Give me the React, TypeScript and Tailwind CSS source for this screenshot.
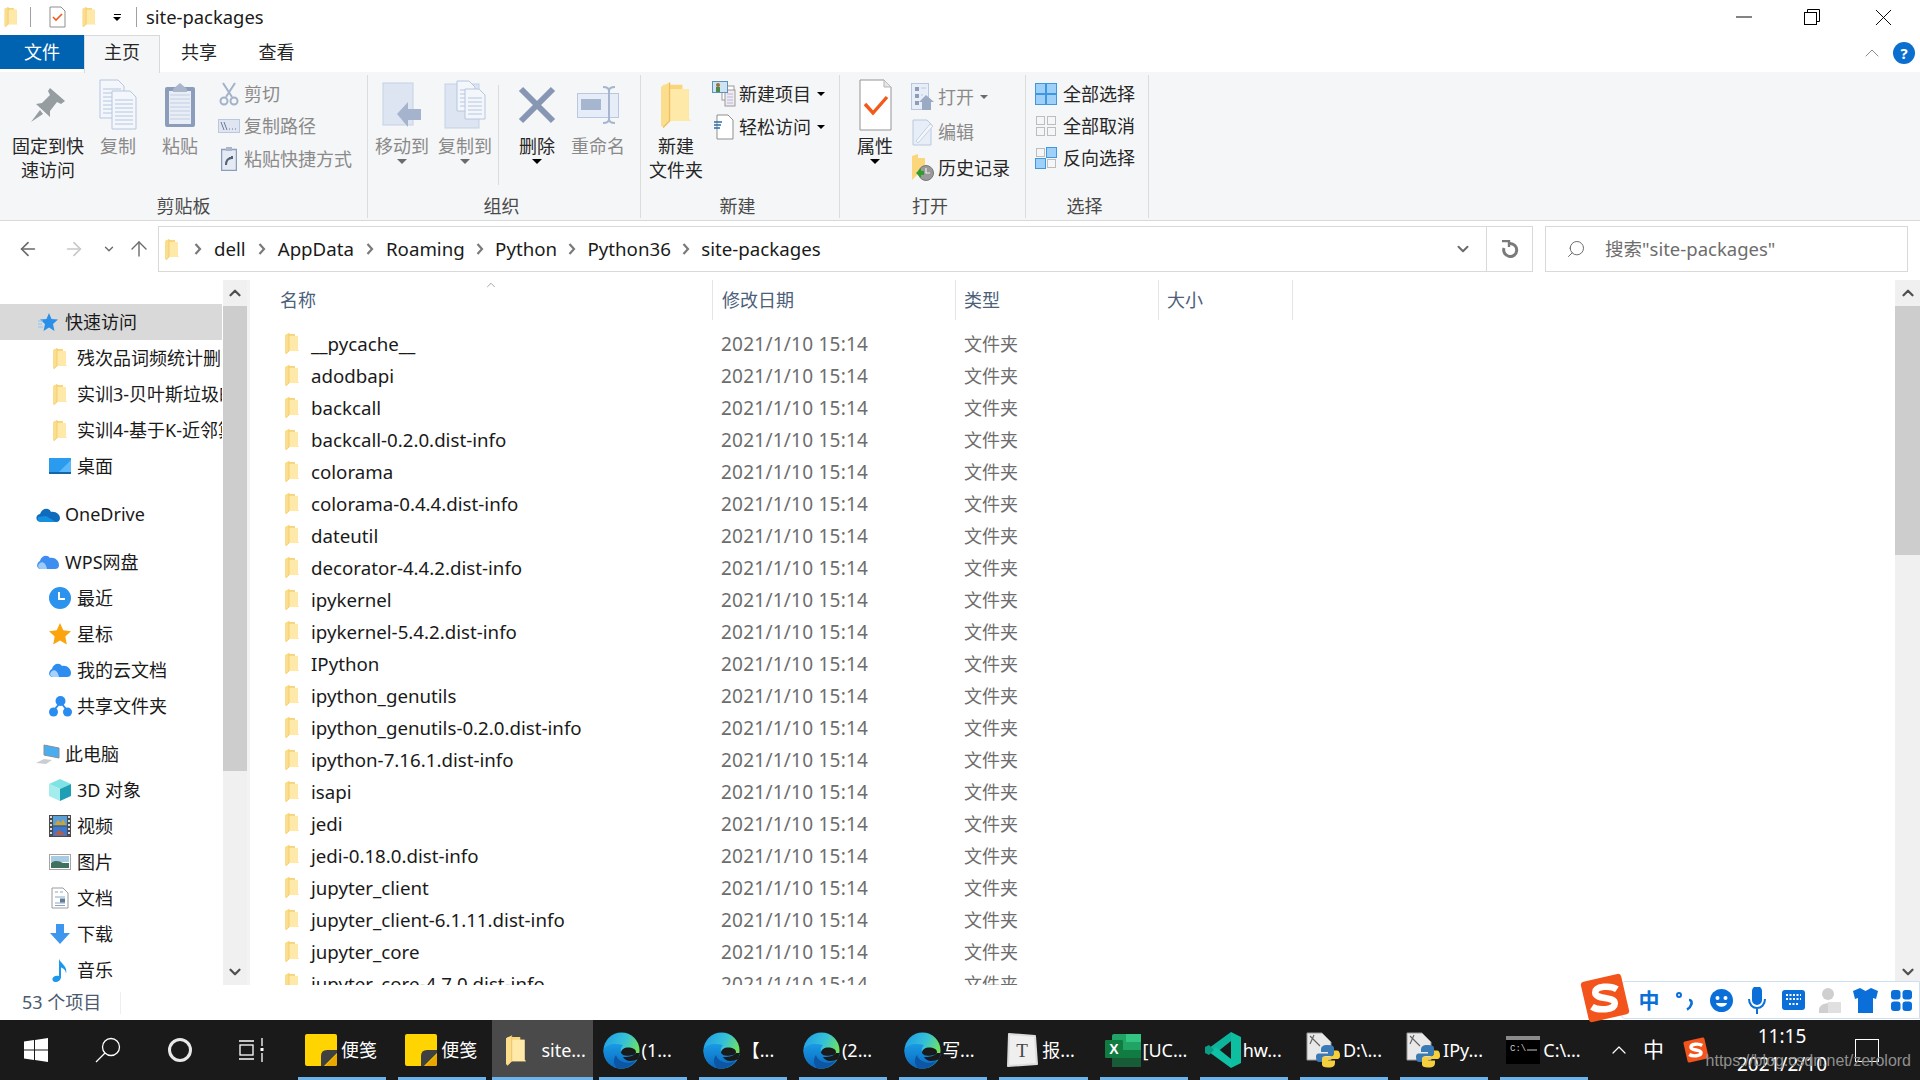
import React from 'react'
import { ArrowLeft, ArrowRight, ArrowUp, ChevronDown, ChevronUp, Search, X, Minus } from 'lucide-react'

const files = [
  '__pycache__', 'adodbapi', 'backcall', 'backcall-0.2.0.dist-info', 'colorama', 'colorama-0.4.4.dist-info',
  'dateutil', 'decorator-4.4.2.dist-info', 'ipykernel', 'ipykernel-5.4.2.dist-info', 'IPython', 'ipython_genutils',
  'ipython_genutils-0.2.0.dist-info', 'ipython-7.16.1.dist-info', 'isapi', 'jedi', 'jedi-0.18.0.dist-info',
  'jupyter_client', 'jupyter_client-6.1.11.dist-info', 'jupyter_core', 'jupyter_core-4.7.0.dist-info',
]

// Explorer's yellow folder
function Folder({ w = 14, h = 21 }: { w?: number; h?: number }) {
  return (
    <svg width={w} height={h} viewBox="0 0 14 21" className="shrink-0">
      <path d="M1 1 L10 1 L10 3 L13 3 L13 17 L14 18 L4 18 L1 20 Z" fill="#f9d67b" />
      <path d="M4 3 L13 3 L13 17 L14 18 L4 18 Z" fill="#ffe9a8" />
      <path d="M0 2 L4 0 L4 18 L1 21 L0 20 Z" fill="#fbdd8e" />
      <path d="M4 0 L4 18 L1 21" fill="none" stroke="#eebf5c" strokeWidth="0.6" />
    </svg>
  )
}

function Page({ x, y, w, h }: { x: number; y: number; w: number; h: number }) {
  const lines = []
  for (let ly = y + 9; ly < y + h - 3; ly += 4) lines.push(ly)
  return (
    <g>
      <path d={`M${x} ${y} H${x + w - 6} L${x + w} ${y + 6} V${y + h} H${x} Z`} fill="#f3f6fb" stroke="#b7c6de" />
      {lines.map(l => <path key={l} d={`M${x + 3} ${l} H${x + w - 3}`} stroke="#b7c6de" />)}
    </g>
  )
}

const icons: Record<string, React.ReactNode> = {
  pin: (
    <svg width="36" height="36" viewBox="0 0 36 36">
      <path d="M20 1 L35 14 L31 17 L27 15 L20 24 L20 30 L6 17 L12 16 L20 8 L18 4 Z" fill="#959da1" />
      <path d="M10 23 L1 35 L13 27 Z" fill="#959da1" />
    </svg>
  ),
  copy: (
    <svg width="38" height="52" viewBox="0 0 38 52">
      <Page x={1} y={1} w={24} h={38} />
      <Page x={13} y={12} w={24} h={38} />
    </svg>
  ),
  paste: (
    <svg width="32" height="46" viewBox="0 0 32 46">
      <rect x="1" y="5" width="30" height="40" rx="2" fill="#8c9dbb" />
      <rect x="5" y="9" width="22" height="33" fill="#e8edf6" />
      {[13, 17, 21, 25, 29, 33, 37].map(y => <path key={y} d={`M6 ${y} H26`} stroke="#c3cfe2" />)}
      <path d="M9 7 L16 1 L23 7 L23 10 L9 10 Z" fill="#a9b6cc" />
    </svg>
  ),
  cut: (
    <svg width="20" height="24" viewBox="0 0 20 24" fill="none" stroke="#a3b2ca" strokeWidth="2">
      <path d="M4 1 L13 15 M16 1 L7 15" />
      <circle cx="5" cy="19" r="3.5" />
      <circle cx="15" cy="19" r="3.5" />
    </svg>
  ),
  path: (
    <svg width="22" height="14" viewBox="0 0 22 14">
      <rect x="0.5" y="0.5" width="21" height="13" fill="#dfe6f2" stroke="#bac7dc" />
      <path d="M3 3 L6 11 M6 3 L9 11" stroke="#6d7b91" />
      <path d="M11 10 h1 M14 10 h1 M17 10 h1" stroke="#6d7b91" />
    </svg>
  ),
  shortcut: (
    <svg width="16" height="24" viewBox="0 0 16 24">
      <rect x="0.5" y="2.5" width="15" height="21" fill="#e5ebf5" stroke="#8c9dbb" strokeWidth="1.5" />
      <rect x="5" y="0" width="6" height="4" fill="#a9b6cc" />
      <path d="M5 18 C5 13 7 11 11 11 L11 9 M11 11 L8 11" stroke="#566377" strokeWidth="2" fill="none" />
    </svg>
  ),
  move: (
    <svg width="40" height="46" viewBox="0 0 40 46">
      <rect x="1" y="1" width="30" height="42" fill="#dde5f2" stroke="#c4d1e5" />
      <path d="M15 32 L26 20 V27 H39 V38 H26 V45 Z" fill="#a5b4cc" />
    </svg>
  ),
  copyTo: (
    <svg width="42" height="50" viewBox="0 0 42 50">
      <rect x="1" y="4" width="34" height="44" fill="#dde5f2" stroke="#c4d1e5" />
      <Page x={13} y={1} w={18} h={30} />
      <Page x={21} y={9} w={20} h={30} />
    </svg>
  ),
  del: (
    <svg width="38" height="38" viewBox="0 0 38 38">
      <path d="M3 3 L35 35 M35 3 L3 35" stroke="#8796b2" strokeWidth="6" />
    </svg>
  ),
  rename: (
    <svg width="42" height="40" viewBox="0 0 42 40">
      <rect x="0.5" y="11.5" width="41" height="24" fill="#e6edf8" stroke="#b9c8df" transform="translate(0 -3)" />
      <rect x="4" y="14" width="20" height="11" fill="#a7b6cf" />
      <path d="M26 2 C30 2 32 3 32 6 V34 C32 37 30 38 26 38 M38 2 C34 2 32 3 32 6 M32 34 C32 37 34 38 38 38" fill="none" stroke="#a7b6cf" strokeWidth="2" />
    </svg>
  ),
  newItem: (
    <svg width="24" height="26" viewBox="0 0 24 26">
      <rect x="10" y="5" width="12" height="14" fill="#fff" stroke="#9a9a9a" />
      <rect x="13" y="9" width="10" height="16" fill="#f5e8ee" stroke="#9a9a9a" />
      <path d="M15 13 H21 M15 16 H21 M15 19 H21 M15 22 H21" stroke="#a8bee0" />
      <rect x="0.5" y="0.5" width="15" height="11" fill="#cfe3f2" stroke="#5c93bd" />
      <circle cx="6" cy="4" r="2" fill="#a0703a" />
      <rect x="4" y="6" width="4" height="5" fill="#4d8a4d" />
    </svg>
  ),
  easy: (
    <svg width="20" height="26" viewBox="0 0 20 26">
      <path d="M3 1 H14 L19 6 V25 H3 Z" fill="#fff" stroke="#8f8f8f" />
      <path d="M0 8 H8 M0 11 H7 M0 14 H6" stroke="#2d6da8" strokeWidth="1.3" />
    </svg>
  ),
  check: (
    <svg width="33" height="52" viewBox="0 0 33 52">
      <path d="M1 1 H25 L32 8 V51 H1 Z" fill="#fff" stroke="#949494" />
      <path d="M25 1 V8 H32" fill="#e6e6e6" stroke="#b5b5b5" />
      <path d="M6 25 L14 34 L28 18" fill="none" stroke="#f2591a" strokeWidth="3.4" />
    </svg>
  ),
  open: (
    <svg width="24" height="28" viewBox="0 0 24 28">
      <rect x="0.5" y="0.5" width="17" height="26" fill="#e8eef8" stroke="#b9c8df" />
      <rect x="4" y="4" width="4" height="4" fill="#8f9eb8" />
      <rect x="4" y="11" width="4" height="4" fill="#8f9eb8" />
      <rect x="4" y="18" width="4" height="4" fill="#8f9eb8" />
      <path d="M10 5 H15 M10 12 H12" stroke="#b9c8df" />
      <path d="M15 12 L23 19 H20 V27 H11 V19 H8 Z" fill="#9aaac4" />
    </svg>
  ),
  edit: (
    <svg width="22" height="27" viewBox="0 0 22 27">
      <path d="M1 1 H15 L19 5 V26 H1 Z" fill="#e8eef8" stroke="#b9c8df" />
      <path d="M4 22 L18 5 L21 7 L6 24 Z" fill="#f5f7fb" stroke="#c6d1e3" />
    </svg>
  ),
  history: (
    <svg width="24" height="28" viewBox="0 0 24 28">
      <path d="M1 2 L7 0 V4 H14 V20 H7 L1 26 Z" fill="#fbd67a" />
      <circle cx="15" cy="19" r="7.5" fill="#9a9a9a" stroke="#777" />
      <path d="M15 14 V19 H19" stroke="#eee" strokeWidth="1.2" fill="none" />
      <path d="M5 19 L10 14 V17 H13 V21 H10 V24 Z" fill="#2f9e2f" />
    </svg>
  ),
}

function Grid({ cells }: { cells: boolean[] }) {
  return (
    <svg width="22" height="22" viewBox="0 0 22 22" className="shrink-0">
      {cells.map((on, i) => {
        const x = i % 2 === 0 ? 0.5 : 11.5
        const y = i < 2 ? 0.5 : 11.5
        return on
          ? <rect key={i} x={x} y={y} width="10" height="10" fill="#9fd0f7" stroke="#3f97e2" />
          : <rect key={i} x={x + 1} y={y + 1} width="8" height="8" fill="#f5f6f7" stroke="#bdbdbd" />
      })}
    </svg>
  )
}

function Caret({ dark = false }: { dark?: boolean }) {
  return <div className={`mx-auto mt-[1px] h-0 w-0 border-x-[5px] border-t-[5px] border-x-transparent ${dark ? 'border-t-black' : 'border-t-[#6b6b6b]'}`} />
}

function LargeButton({ icon, lines, width, disabled, caret }: { icon: React.ReactNode; lines: string[]; width: string; disabled?: boolean; caret?: boolean }) {
  return (
    <div className={`flex flex-col items-center ${width}`}>
      <div className="flex h-[54px] items-center justify-center">{icon}</div>
      <div className={`mt-[2px] whitespace-nowrap text-center leading-[24px] ${disabled ? 'text-[#8a8a8a]' : 'text-[#262626]'}`}>
        {lines.map(l => <div key={l}>{l}</div>)}
        {caret && <Caret dark={!disabled} />}
      </div>
    </div>
  )
}

function SmallButton({ icon, label, disabled, caret, h = 'h-8' }: { icon: React.ReactNode; label: string; disabled?: boolean; caret?: boolean; h?: string }) {
  return (
    <div className={`flex items-center ${h}`}>
      <div className="flex w-[26px] shrink-0 justify-center">{icon}</div>
      <span className={`ml-[2px] whitespace-nowrap ${disabled ? 'text-[#8a8a8a]' : 'text-[#262626]'}`}>{label}</span>
      {caret && <div className={`ml-[6px] h-0 w-0 border-x-[4px] border-t-[4px] border-x-transparent ${disabled ? 'border-t-[#6b6b6b]' : 'border-t-black'}`} />}
    </div>
  )
}

function Group({ label, width, labelClass = 'pr-[5px]', children }: { label: string; width: string; labelClass?: string; children: React.ReactNode }) {
  return (
    <div className={`flex h-full shrink-0 flex-col border-r border-[#dcdcdc] ${width}`}>
      <div className="flex h-[122px] pt-[3px]">{children}</div>
      <div className={`text-center leading-[24px] text-[#4a4a4a] ${labelClass}`}>{label}</div>
    </div>
  )
}

function Ribbon() {
  return (
    <div className="flex h-[150px] shrink-0 border-y border-[#d9d9d9] bg-[#f5f6f7] pb-[2px] pt-[3px]">
      <Group label="剪贴板" width="w-[368px]" labelClass="">
        <LargeButton width="w-[96px]" icon={icons.pin} lines={['固定到快', '速访问']} />
        <LargeButton width="w-[44px]" disabled icon={icons.copy} lines={['复制']} />
        <div className="ml-[10px]"><LargeButton width="w-[60px]" disabled icon={icons.paste} lines={['粘贴']} /></div>
        <div className="ml-[6px] flex flex-col">
          <SmallButton disabled icon={icons.cut} label="剪切" />
          <SmallButton disabled icon={icons.path} label="复制路径" />
          <SmallButton disabled icon={icons.shortcut} label="粘贴快捷方式" h="h-[34px]" />
        </div>
      </Group>
      <Group label="组织" width="w-[273px]">
        <LargeButton width="w-[66px] ml-[1px]" disabled caret icon={icons.move} lines={['移动到']} />
        <LargeButton width="w-[60px]" disabled caret icon={icons.copyTo} lines={['复制到']} />
        <div className="ml-[3px] mr-[8px] mt-[7px] h-[100px] w-px bg-[#dcdcdc]" />
        <LargeButton width="w-[60px]" caret icon={icons.del} lines={['删除']} />
        <LargeButton width="w-[62px]" disabled icon={icons.rename} lines={['重命名']} />
      </Group>
      <Group label="新建" width="w-[199px]">
        <LargeButton width="w-[70px]" icon={<Folder w={30} h={46} />} lines={['新建', '文件夹']} />
        <div className="flex flex-col">
          <SmallButton icon={icons.newItem} label="新建项目" caret />
          <SmallButton icon={icons.easy} label="轻松访问" caret h="h-[34px]" />
        </div>
      </Group>
      <Group label="打开" width="w-[186px]">
        <LargeButton width="w-[70px]" caret icon={icons.check} lines={['属性']} />
        <div className="flex flex-col pt-[1px]">
          <SmallButton disabled caret icon={icons.open} label="打开" h="h-[36px]" />
          <SmallButton disabled icon={icons.edit} label="编辑" h="h-[35px]" />
          <SmallButton icon={icons.history} label="历史记录" h="h-[36px]" />
        </div>
      </Group>
      <Group label="选择" width="w-[123px]">
        <div className="ml-[9px] flex flex-col text-[#262626]">
          {[
            { label: '全部选择', cells: [true, true, true, true] },
            { label: '全部取消', cells: [false, false, false, false] },
            { label: '反向选择', cells: [false, true, true, false] },
          ].map(r => (
            <div key={r.label} className="flex h-8 items-center gap-[6px] whitespace-nowrap">
              <Grid cells={r.cells} />
              {r.label}
            </div>
          ))}
        </div>
      </Group>
    </div>
  )
}

function TitleBar() {
  return (
    <div className="flex h-[35px] shrink-0 items-center bg-white pb-[1px]">
      <div className="ml-[4px]"><Folder w={14} h={20} /></div>
      <div className="ml-[12px] h-[20px] w-px bg-[#a0a0a0]" />
      <div className="ml-[18px]"><svg width="17" height="22" viewBox="0 0 17 22"><path d="M1 1 H12 L16 5 V21 H1 Z" fill="#fff" stroke="#8f8f8f" /><path d="M4 11 L7 14 L13 8" fill="none" stroke="#f2591a" strokeWidth="1.6" /></svg></div>
      <div className="ml-[16px]"><Folder w={14} h={20} /></div>
      <div className="ml-[17px] flex flex-col items-center">
        <div className="mb-[2px] h-[1px] w-[7px] bg-black" />
        <div className="h-0 w-0 border-x-[4px] border-t-[4px] border-x-transparent border-t-black" />
      </div>
      <div className="ml-[15px] h-[20px] w-px bg-[#a0a0a0]" />
      <span className="ml-[9px] text-[18.4px] text-[#1a1a1a]">site-packages</span>
      <div className="ml-auto flex items-center">
        <div className="flex w-[67px] justify-center"><Minus size={26} strokeWidth={0.9} /></div>
        <div className="flex w-[69px] justify-center">
          <svg width="16" height="16" viewBox="0 0 16 16" fill="none" stroke="#000"><rect x="0.5" y="3.5" width="12" height="12" /><path d="M3.5 3.5 V0.5 H15.5 V12.5 H12.5" /></svg>
        </div>
        <div className="flex w-[74px] justify-center"><X size={29} strokeWidth={0.8} /></div>
      </div>
    </div>
  )
}

function Tabs() {
  return (
    <div className="relative z-10 -mb-px flex h-[37px] shrink-0 items-start bg-white">
      <div className="flex h-[34px] w-[84px] items-center justify-center bg-[#0063b1] text-white">文件</div>
      <div className="flex h-[38px] w-[76px] items-center justify-center border-x border-t border-[#d9d9d9] bg-[#f5f6f7] pb-[4px] text-[#262626]">主页</div>
      <div className="flex h-[34px] w-[78px] items-center justify-center text-[#262626]">共享</div>
      <div className="flex h-[34px] w-[77px] items-center justify-center text-[#262626]">查看</div>
      <div className="ml-auto flex h-[36px] items-center pr-[5px]">
        <ChevronUp size={24} strokeWidth={1} className="text-[#8a8a8a]" />
        <div className="ml-[9px] flex h-[22px] w-[22px] items-center justify-center rounded-full bg-[#0a6fcf] text-[15px] font-bold text-white">?</div>
      </div>
    </div>
  )
}

const CrumbSep = ({ tight }: { tight: boolean }) => (
  <svg width="8" height="12" viewBox="0 0 8 12" className={`shrink-0 ${tight ? 'mx-[11.2px]' : 'mx-[12px]'}`}><path d="M1.5 1 L6 6 L1.5 11" fill="none" stroke="#7a7a7a" strokeWidth="2.2" /></svg>
)

function AddressRow() {
  const crumbs = ['dell', 'AppData', 'Roaming', 'Python', 'Python36', 'site-packages']
  return (
    <div className="flex h-[59px] shrink-0 items-start bg-white pt-[5px]">
      <div className="flex h-[46px] w-[158px] shrink-0 items-center">
        <ArrowLeft size={22} strokeWidth={1.8} className="ml-[17px] text-[#6a6a6a]" />
        <ArrowRight size={22} strokeWidth={1.8} className="ml-[24px] text-[#c8c8c8]" />
        <ChevronDown size={14} strokeWidth={2.4} className="ml-[17px] text-[#6a6a6a]" />
        <ArrowUp size={24} strokeWidth={1.4} className="ml-[11px] text-[#6a6a6a]" />
      </div>
      <div className="flex h-[46px] w-[1375px] shrink-0 items-center border border-[#d9d9d9]">
        <div className="ml-[6px]"><Folder w={14} h={21} /></div>
        <div className="ml-[3px] flex items-center text-[18.7px] text-[#1a1a1a]">
          {crumbs.map((c, i) => (
            <React.Fragment key={c}>
              <CrumbSep tight={i >= 3} />
              <span>{c}</span>
            </React.Fragment>
          ))}
        </div>
        <ChevronDown size={18} strokeWidth={2.6} className="ml-auto mr-[14px] text-[#6a6a6a]" />
        <div className="flex h-full w-[46px] items-center justify-center border-l border-[#d9d9d9]">
          <svg width="18" height="18" viewBox="0 0 18 18" fill="none" stroke="#7a7a7a" strokeWidth="3">
            <path d="M9 3.5 A6.5 6.5 0 1 1 3 8" />
            <path d="M1 1 L8 1 L8 7" strokeWidth="2.4" />
          </svg>
        </div>
      </div>
      <div className="ml-[12px] flex h-[46px] w-[363px] shrink-0 items-center border border-[#d9d9d9] pl-[20px] text-[#6d6d6d]">
        <Search size={20} strokeWidth={1.2} className="-scale-x-100 text-[#6d6d6d]" />
        <span className="ml-[19px] text-[18.5px]">搜索"site-packages"</span>
      </div>
    </div>
  )
}

const navIcons: Record<string, React.ReactNode> = {
  quick: <svg width="20" height="20" viewBox="0 0 20 20"><path d="M11 1 L13.5 7 L20 7.5 L15 12 L16.5 19 L11 15.5 L5.5 19 L7 12 L2 7.5 L8.5 7 Z" fill="#2a8fe8" /><path d="M0 9 H5 M0 12 H4 M0 15 H5" stroke="#8cc6f5" /></svg>,
  desktop: <svg width="22" height="16" viewBox="0 0 22 16"><rect width="22" height="14" fill="#2b9bf0" /><path d="M10 14 L22 2 V14 Z" fill="#5bb8fa" /><rect y="14" width="22" height="2" fill="#1565a8" /></svg>,
  onedrive: <svg width="24" height="15" viewBox="0 0 24 15"><path d="M5 15 C-1 15 -1 8 4 7 C6 1 13 0 15 5 C20 4 24 8 24 11 C24 13 23 15 20 15 Z" fill="#0f6cbd" /><path d="M5 15 C2 15 1 12 2 10 L10 9 L20 15 Z" fill="#1490df" /></svg>,
  wps: <svg width="22" height="16" viewBox="0 0 22 16"><path d="M4 15 C-1 15 -1 9 3 7 C4 2 10 0 13 4 C18 3 22 7 22 11 C22 14 20 15 18 15 Z" fill="#3d8ef0" /><path d="M4 15 C1 15 0 11 3 9 C6 7 9 10 10 15 Z" fill="#9ccbfa" /></svg>,
  recent: <svg width="22" height="22" viewBox="0 0 22 22"><circle cx="11" cy="11" r="11" fill="#2b92ee" /><path d="M10 5 V12 H16" fill="none" stroke="#fff" strokeWidth="2" /></svg>,
  star: <svg width="22" height="22" viewBox="0 0 22 22"><path d="M11 0 L14.3 7.3 L22 8.2 L16.3 13.5 L17.8 21.5 L11 17.5 L4.2 21.5 L5.7 13.5 L0 8.2 L7.7 7.3 Z" fill="#fba40e" strokeLinejoin="round" /></svg>,
  cloud: <svg width="22" height="16" viewBox="0 0 22 16"><path d="M4 15 C-1 15 -1 9 3 7 C4 2 10 0 13 4 C18 3 22 7 22 11 C22 14 20 15 18 15 Z" fill="#2f8df0" /><path d="M4 15 C1 15 0 11 3 9 C6 7 9 10 10 15 Z" fill="#a8d2fb" /></svg>,
  share: <svg width="23" height="21" viewBox="0 0 23 21" fill="#2b8cf0"><circle cx="11.5" cy="5" r="5" /><circle cx="4.5" cy="16" r="4.5" /><circle cx="18.5" cy="16" r="4.5" /><path d="M10 8 L6 13 M13 8 L17 13" stroke="#2b8cf0" strokeWidth="2" /></svg>,
  pc: <svg width="24" height="20" viewBox="0 0 24 20"><path d="M8 1 L23 4 V14 L8 11 Z" fill="#49aef0" stroke="#8a8f96" /><path d="M0 19 L8 15 L16 16 L10 20 Z" fill="#c9ced3" /></svg>,
  cube: <svg width="22" height="22" viewBox="0 0 22 22"><path d="M11 0 L22 5 L11 10 L0 5 Z" fill="#7fe3e6" /><path d="M0 5 L11 10 V22 L0 17 Z" fill="#a5ecec" /><path d="M22 5 L11 10 V22 L22 17 Z" fill="#1f9fb3" /></svg>,
  video: <svg width="22" height="22" viewBox="0 0 22 22"><rect width="22" height="22" fill="#4a4a4a" /><rect x="4" y="1" width="14" height="9.5" fill="#5a9fd8" /><rect x="4" y="11.5" width="14" height="9.5" fill="#3a78d0" /><path d="M5 10 L9 5 L12 8 L14 4 L17 10 Z" fill="#c9a33c" /><path d="M5 20 L10 15 L17 20 Z" fill="#c05a3c" /><path d="M1 2 h2 M1 6 h2 M1 10 h2 M1 14 h2 M1 18 h2 M19 2 h2 M19 6 h2 M19 10 h2 M19 14 h2 M19 18 h2" stroke="#ddd" strokeWidth="2" /></svg>,
  pic: <svg width="22" height="16" viewBox="0 0 22 16"><rect x="0.5" y="0.5" width="21" height="15" fill="#fff" stroke="#a5a5a5" /><rect x="2" y="2" width="18" height="6" fill="#a9cbe3" /><path d="M2 9 C6 6 10 7 14 9 L20 9 V14 H2 Z" fill="#3f7060" /></svg>,
  doc: <svg width="18" height="22" viewBox="0 0 18 22"><path d="M1 1 H12 L17 6 V21 H1 Z" fill="#fff" stroke="#9c9c9c" /><path d="M4 5 H7 M9 5 H12 M4 10 H14 M4 16 H14 M4 18.5 H14" stroke="#8aa5c5" /><rect x="9" y="11.5" width="5" height="4" fill="#5d7d99" /></svg>,
  down: <svg width="20" height="20" viewBox="0 0 20 20"><path d="M6 0 H14 V9 H20 L10 20 L0 9 H6 Z" fill="#3e97ec" /></svg>,
  music: <svg width="17" height="23" viewBox="0 0 17 23"><path d="M7 0 C9 5 16 7 14 15 C14 11 11 9 9 8.5 V18 C9 21 6 23 3.5 23 C1 23 0 21 0.5 19.5 C1 17.5 4 16 7 17 Z" fill="#1d97ea" /></svg>,
}

const nav: { label: string; icon: React.ReactNode; level: number; gap?: boolean; active?: boolean }[] = [
  { label: '快速访问', icon: navIcons.quick, level: 1, active: true },
  { label: '残次品词频统计删除', icon: <Folder />, level: 2 },
  { label: '实训3-贝叶斯垃圾邮件', icon: <Folder />, level: 2 },
  { label: '实训4-基于K-近邻算法', icon: <Folder />, level: 2 },
  { label: '桌面', icon: navIcons.desktop, level: 2 },
  { label: 'OneDrive', icon: navIcons.onedrive, level: 1, gap: true },
  { label: 'WPS网盘', icon: navIcons.wps, level: 1, gap: true },
  { label: '最近', icon: navIcons.recent, level: 2 },
  { label: '星标', icon: navIcons.star, level: 2 },
  { label: '我的云文档', icon: navIcons.cloud, level: 2 },
  { label: '共享文件夹', icon: navIcons.share, level: 2 },
  { label: '此电脑', icon: navIcons.pc, level: 1, gap: true },
  { label: '3D 对象', icon: navIcons.cube, level: 2 },
  { label: '视频', icon: navIcons.video, level: 2 },
  { label: '图片', icon: navIcons.pic, level: 2 },
  { label: '文档', icon: navIcons.doc, level: 2 },
  { label: '下载', icon: navIcons.down, level: 2 },
  { label: '音乐', icon: navIcons.music, level: 2 },
]

function Sidebar() {
  return (
    <div className="flex w-[250px] shrink-0 border-r-[3px] border-[#f3f3f3]">
      <div className="w-[222px] shrink-0 overflow-hidden pt-[24px]">
        {nav.map(item => (
          <div
            key={item.label}
            className={`flex h-9 items-center overflow-hidden whitespace-nowrap text-[#1a1a1a] ${item.gap ? 'mt-3' : ''} ${item.active ? 'bg-[#d9d9d9]' : ''}`}
          >
            <div className={`flex w-6 shrink-0 justify-center ${item.level === 1 ? 'ml-[36px]' : 'ml-[48px]'}`}>{item.icon}</div>
            <span className="ml-[5px]">{item.label}</span>
          </div>
        ))}
      </div>
      <div className="ml-px flex w-[24px] shrink-0 flex-col bg-[#f0f0f0]">
        <div className="flex h-[26px] items-center justify-center"><ChevronUp size={18} strokeWidth={3} className="text-[#505050]" /></div>
        <div className="h-[465px] bg-[#cdcdcd]" />
        <div className="mt-auto flex h-[26px] items-center justify-center"><ChevronDown size={18} strokeWidth={3} className="text-[#505050]" /></div>
      </div>
    </div>
  )
}

function FileList() {
  return (
    <div className="relative min-w-0 flex-1 overflow-hidden">
      <ChevronUp size={14} strokeWidth={1} className="absolute left-[234px] top-[-2px] text-[#6a6a6a]" />
      <div className="flex h-[48px] items-start text-[#4c607a]">
        {[
          { label: '名称', w: 'w-[462px] pl-[30px]' },
          { label: '修改日期', w: 'w-[243px] pl-[9px] border-l border-[#e5e5e5]' },
          { label: '类型', w: 'w-[203px] pl-[8px] border-l border-[#e5e5e5]' },
          { label: '大小', w: 'w-[135px] pl-[8px] border-x border-[#e5e5e5]' },
        ].map(c => (
          <div key={c.label} className={`flex h-[40px] items-center ${c.w}`}>{c.label}</div>
        ))}
      </div>
      {files.map(name => (
        <div key={name} className="flex h-8 items-center">
          <div className="ml-[35px] flex w-[427px] items-center">
            <Folder />
            <span className="ml-[12px] text-[18.7px] text-[#1a1a1a]">{name}</span>
          </div>
          <div className="w-[243px] pl-[9px] text-[19px] tracking-[0.23px] text-[#6d6d6d]">2021/1/10 15:14</div>
          <div className="pl-[9px] text-[#6d6d6d]">文件夹</div>
        </div>
      ))}
    </div>
  )
}

function EdgeIcon() {
  return (
    <svg width="37" height="37" viewBox="0 0 37 37" className="shrink-0">
      <defs>
        <linearGradient id="edgeA" x1="0" y1="0.1" x2="1" y2="0.5"><stop offset="0" stopColor="#1f9de6" /><stop offset="0.55" stopColor="#35c1d8" /><stop offset="1" stopColor="#74e457" /></linearGradient>
        <linearGradient id="edgeB" x1="0" y1="0" x2="0" y2="1"><stop offset="0" stopColor="#1a9ae4" /><stop offset="1" stopColor="#0a68bd" /></linearGradient>
      </defs>
      <circle cx="18.5" cy="18.5" r="18" fill="url(#edgeA)" />
      <path d="M0.5 18 C0.5 29 8 36.5 18 36.5 C25 36.5 31 33 34 28 L37 22 L20 22 C17 20 17 16 20 13 C12 11 3 12 0.5 18 Z" fill="url(#edgeB)" />
      <path d="M14 36 C10 32 10 27 13 23 C15 30 25 33 32 29 C28 35 20 38 14 36 Z" fill="#0d56a6" />
      <path d="M18 21 C18 17 22 15 27 15.5 C31 16 33 18 33 20 C33 22.5 31 23 27 23.5 C23 24 20 24 18 21 Z" fill="#1a1a1a" />
      <path d="M33 21 L37 21 L35 27 C33 28 30 29 27 29 C24 29 21 27 20 25 C24 25 30 25 33 21 Z" fill="#1a1a1a" />
    </svg>
  )
}

function PyFile() {
  return (
    <svg width="34" height="36" viewBox="0 0 34 36" className="shrink-0">
      <path d="M1 1 H16 L25 10 V28 H1 Z" fill="#e9e9e9" stroke="#9a9a9a" />
      <path d="M4 4 L14 14 M8 3 L4 12" stroke="#666" strokeWidth="1.2" />
      <path d="M22 13 C16 13 15 15 15 18 V20 H22 V21.5 H13 C10 21.5 10 24 10 25 C10 28 11 30 13 30 H16 V27 C16 25 18 24 20 24 H25 C27 24 28 23 28 21 V16 C28 14 26 13 22 13 Z" fill="#3b7bb5" />
      <path d="M22 13 C16 13 15 15 15 18 V20 H22 V21.5 H13 C10 21.5 10 24 10 25 C10 28 11 30 13 30 H16 V27 C16 25 18 24 20 24 H25 C27 24 28 23 28 21 V16 C28 14 26 13 22 13 Z" fill="#f6cf3e" transform="rotate(180 22 24.2)" />
    </svg>
  )
}

const Sticky = () => (
  <svg width="32" height="32" viewBox="0 0 32 32" className="shrink-0">
    <rect width="32" height="32" rx="2" fill="#ffd400" />
    <path d="M16 32 V22 Q16 16 22 16 H32 V19 L19 32 Z" fill="#404040" />
    <path d="M20 32 L32 20 V30 Q32 32 30 32 Z" fill="#e8a800" />
  </svg>
)

const taskItems: { label: string; icon: React.ReactNode; active?: boolean }[] = [
  { label: '便笺', icon: <Sticky /> },
  { label: '便笺', icon: <Sticky /> },
  { label: 'site...', icon: <div className="pr-[10px]"><Folder w={20} h={31} /></div>, active: true },
  { label: '(1...', icon: <EdgeIcon /> },
  { label: '【...', icon: <EdgeIcon /> },
  { label: '(2...', icon: <EdgeIcon /> },
  { label: '写...', icon: <EdgeIcon /> },
  {
    label: '报...',
    icon: <svg width="32" height="34" viewBox="0 0 32 34" className="shrink-0"><path d="M3 1 L29 3 L31 31 L2 33 Z" fill="#efefef" stroke="#dcdcdc" strokeLinejoin="round" strokeWidth="2" /><text x="16" y="24" textAnchor="middle" fontSize="19" fill="#444" fontFamily="Liberation Serif, serif">T</text></svg>,
  },
  {
    label: '[UC...',
    icon: <svg width="36" height="34" viewBox="0 0 36 34" className="shrink-0"><rect x="7" y="1" width="29" height="33" rx="2" fill="#21a366" /><rect x="21" y="1" width="15" height="8" fill="#33c481" /><rect x="7" y="17" width="29" height="8" fill="#107c41" /><rect x="7" y="25" width="29" height="9" fill="#185c37" /><rect y="7" width="18" height="18" rx="1" fill="#107c41" /><text x="9" y="21" textAnchor="middle" fontSize="14" fontWeight="700" fill="#fff" fontFamily="Liberation Sans, sans-serif">X</text></svg>,
  },
  {
    label: 'hw...',
    icon: <svg width="36" height="36" viewBox="0 0 36 36" className="shrink-0"><path d="M26 0 L36 5 V31 L26 36 Z" fill="#0dbfa0" /><path d="M26 0 V9 L11 21 L4 16 Z" fill="#0db39a" /><path d="M26 36 V27 L11 15 L4 20 Z" fill="#10c2a5" /><path d="M0 15 L4 13 L9 18 L4 23 L0 21 Z" fill="#0b9c85" /></svg>,
  },
  { label: 'D:\\...', icon: <PyFile /> },
  { label: 'IPy...', icon: <PyFile /> },
  {
    label: 'C:\\...',
    icon: <svg width="34" height="28" viewBox="0 0 34 28" className="shrink-0"><rect width="34" height="28" fill="#000" /><rect width="34" height="4" fill="#8a8a8a" /><text x="4" y="15" fontSize="9" fill="#c8c8c8" fontFamily="Liberation Mono, monospace">C:\</text><path d="M21 14 H31" stroke="#c8c8c8" /></svg>,
  },
]

function SogouLogo({ size }: { size: number }) {
  return (
    <svg width={size} height={size} viewBox="0 0 46 46" className="shrink-0">
      <rect x="4" y="4" width="38" height="38" rx="3" fill="#f3541c" transform="rotate(-13 23 23)" />
      <path d="M34 15 C28 11 14 12 14 18 C14 25 32 21 32 28 C32 34 17 35 11 31" fill="none" stroke="#fff" strokeWidth="6" />
    </svg>
  )
}

function Taskbar() {
  return (
    <div className="relative flex h-[60px] shrink-0 items-stretch bg-[#1a1a1a] text-white">
      <div className="flex w-[292px] shrink-0 items-center">
        <div className="flex w-[71px] justify-center">
          <svg width="24" height="24" viewBox="0 0 24 24" fill="#fff"><path d="M0 3.4 L10 2 V11.4 H0 Z M11 1.9 L24 0 V11.4 H11 Z M0 12.6 H10 V22 L0 20.6 Z M11 12.6 H24 V24 L11 22.1 Z" /></svg>
        </div>
        <div className="flex w-[73px] justify-center">
          <svg width="26" height="26" viewBox="0 0 26 26" fill="none" stroke="#fff" strokeWidth="1.3"><circle cx="16" cy="10" r="8.5" /><path d="M10 16 L1 25" /></svg>
        </div>
        <div className="flex w-[72px] justify-center"><div className="h-[24px] w-[24px] rounded-full border-[3.5px] border-[#e8e8e8]" /></div>
        <div className="flex w-[72px] justify-center">
          <svg width="26" height="24" viewBox="0 0 26 24" fill="none" stroke="#fff" strokeWidth="1.3"><path d="M0 3 H15 M0 21 H15" /><rect x="1" y="7" width="13" height="10" /><path d="M23 0 V8 M23 15 V24" /><rect x="21.5" y="10" width="3" height="3" fill="#fff" stroke="none" /></svg>
        </div>
      </div>
      {taskItems.map((t, i) => (
        <div key={i} className={`relative flex w-[100.2px] shrink-0 items-center pl-[10px] ${t.active ? 'bg-[#4a4a4a]' : ''}`}>
          <div className="flex w-[38px] shrink-0 justify-center">{t.icon}</div>
          <span className="whitespace-nowrap pl-[1px]">{t.label}</span>
          <div className={`absolute bottom-0 h-[3px] bg-[#6cb2eb] ${t.active ? 'inset-x-0' : 'inset-x-[6px]'}`} />
        </div>
      ))}
      <div className="ml-auto flex items-center">
        <ChevronUp size={24} strokeWidth={1.2} className="mr-[12px]" />
        <span className="mr-[19px] text-[21px]">中</span>
        <SogouLogo size={26} />
        <div className="flex w-[146px] flex-col items-center text-[19px] leading-[28px]">
          <span>11:15</span>
          <span>2021/2/10</span>
        </div>
        <div className="mr-[41px] h-[23px] w-[24px] border border-white" />
      </div>
      {/* csdn watermark burned into the screenshot */}
      <span className="absolute right-[9px] top-[29px] font-['Liberation_Sans',sans-serif] text-[16px] text-[#8f8f8f]">https://blog.csdn.net/zerolord</span>
    </div>
  )
}

function SogouBar() {
  const blue = '#0a6fd8'
  return (
    <div className="absolute bottom-[60px] right-0 z-20 h-[39px]">
      <div className="relative flex h-[38px] w-[299px] items-center rounded-l-sm border border-[#cfdff2] bg-white pl-[9px]">
        <div className="absolute -left-[42px] -top-[9px]"><SogouLogo size={50} /></div>
        <div className="flex w-[36.6px] justify-center text-[21px] font-bold leading-none text-[#0a6fd8]">中</div>
        <div className="flex w-[36.6px] justify-center">
          <svg width="18" height="22" viewBox="0 0 18 22" fill="none" stroke={blue} strokeWidth="2"><circle cx="3" cy="6" r="2" /><path d="M13 11 C16 11 16 14 15 16 C14.5 18 13 19.5 11 20.5" strokeWidth="2.6" /></svg>
        </div>
        <div className="flex w-[36.6px] justify-center">
          <svg width="23" height="23" viewBox="0 0 23 23"><circle cx="11.5" cy="11.5" r="11.5" fill={blue} /><circle cx="7.5" cy="9" r="2" fill="#fff" /><circle cx="15.5" cy="9" r="2" fill="#fff" /><path d="M6 14 H17 C16 19 7 19 6 14 Z" fill="#fff" /></svg>
        </div>
        <div className="flex w-[36.6px] justify-center">
          <svg width="18" height="27" viewBox="0 0 18 27" fill="none" stroke={blue} strokeWidth="2"><rect x="5" y="0" width="8" height="17" rx="4" fill={blue} /><path d="M1 12 C1 24 17 24 17 12 M9 21 V27" /></svg>
        </div>
        <div className="flex w-[36.6px] justify-center">
          <svg width="23" height="20" viewBox="0 0 23 20"><rect width="23" height="20" rx="3" fill={blue} /><path d="M4 5 h15 M4 9 h15 M7 14 h9" stroke="#fff" strokeWidth="2" strokeDasharray="2 1.5" /></svg>
        </div>
        <div className="flex w-[36.6px] justify-center">
          <svg width="23" height="26" viewBox="0 0 23 26" fill="#cfcfcf"><circle cx="10" cy="7" r="6" /><path d="M1 23 C1 14 19 14 19 23 V26 H1 Z" /><rect x="10" y="15" width="13" height="11" fill="#e0e0e0" /></svg>
        </div>
        <div className="flex w-[36.6px] justify-center">
          <svg width="25" height="25" viewBox="0 0 25 25" fill={blue}><path d="M7 0 L12.5 3 L18 0 L25 3 L23 11 L20 10 V25 H5 V10 L2 11 L0 3 Z" /></svg>
        </div>
        <div className="flex w-[36.6px] justify-center">
          <svg width="21" height="21" viewBox="0 0 21 21" fill={blue}><rect width="9.5" height="9.5" rx="3" /><rect x="11.5" width="9.5" height="9.5" rx="3" /><rect y="11.5" width="9.5" height="9.5" rx="3" /><rect x="11.5" y="11.5" width="9.5" height="9.5" rx="3" /></svg>
        </div>
      </div>
    </div>
  )
}

export default function App() {
  return (
    <div className="relative flex h-screen w-full flex-col overflow-hidden bg-white font-['Noto_Sans','Noto_Sans_CJK_SC',sans-serif] text-[18px]">
      <TitleBar />
      <Tabs />
      <Ribbon />
      <AddressRow />
      <div className="flex h-[705px] shrink-0">
        <Sidebar />
        <FileList />
        <div className="flex w-[25px] shrink-0 flex-col bg-[#f0f0f0]">
          <div className="flex h-[26px] items-center justify-center"><ChevronUp size={18} strokeWidth={3} className="text-[#505050]" /></div>
          <div className="h-[249px] bg-[#cdcdcd]" />
          <div className="mt-auto flex h-[26px] items-center justify-center"><ChevronDown size={18} strokeWidth={3} className="text-[#505050]" /></div>
        </div>
      </div>
      <div className="flex h-[35px] shrink-0 items-center text-[#4a5a70]">
        <div className="flex h-[22px] w-[121px] items-center border-r border-[#eeeeee] pl-[22px]">53 个项目</div>
      </div>
      <SogouBar />
      <Taskbar />
    </div>
  )
}
